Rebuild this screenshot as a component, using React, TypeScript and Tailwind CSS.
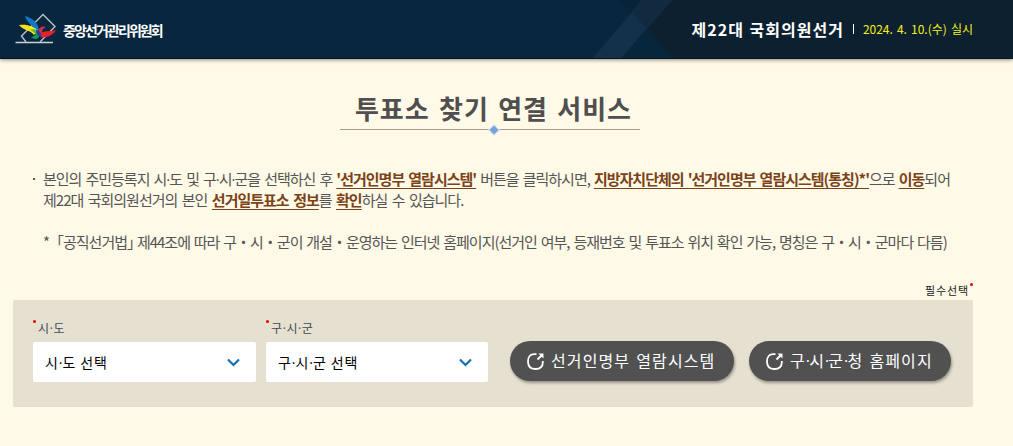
import { Fragment } from 'react';
import type { ReactNode } from 'react';

function Logo() {
  return (
    <svg width="42" height="32" viewBox="0 0 42 32" fill="none">
      <path d="M0.500 29.500H38" stroke="#c9d0d8" strokeWidth="1.6" />
      <path d="M11 29L6.500 23L28 1.500L40 13.500L25 29" stroke="#b9c2cc" strokeWidth="1.4" />
      <path d="M10 3C17 5 23 9 24 17L20 18C18 12 12 10 10 3Z" fill="#1377c8" />
      <path d="M4 12C12 11 19 13 23 18L19 22C16 17 9 18 4 12Z" fill="#f5e616" />
      <path d="M15 17C18 18 20 20 21 22L23 18C20 16 18 16 15 17Z" fill="#55b947" />
      <path d="M16 24C19 24 22 21 24 17L24 24C22 27 18 26 16 24Z" fill="#139c58" />
      <path d="M24 16C26 13 29 13 31 14C28 15 27 17 27 20L24 22Z" fill="#d72a4c" />
      <path d="M26 20C31 17 36 19 41 17C38 22 33 25 25 24Z" fill="#e8202b" />
      <path d="M21 17C24 17 27 20 26 24C23 23 21 21 21 17Z" fill="#29409b" />
    </svg>
  );
}

// Korean fonts set the middle dot wide, so it is taken from a Latin one
function Dotted({ text, dotClass = '' }: { text: string; dotClass?: string }) {
  return text.split('·').map((part, i) => (
    <Fragment key={i}>
      {i > 0 && <span className={`font-['Open_Sans',sans-serif] leading-none ${dotClass}`}>·</span>}
      {part}
    </Fragment>
  ));
}

function Header() {
  return (
    <header className="relative flex h-[59px] items-center justify-between border-b border-[#061521] bg-[#08273f] pl-[15px] pr-10 shadow-[0_1px_4px_rgba(0,0,0,0.45)]">
      <svg className="absolute inset-0 h-[58px] w-full" viewBox="0 0 1013 58" preserveAspectRatio="none">
        <path d="M620 0H1013V58H672Z" fill="#0d2030" />
        <path d="M620 0H642L633 15Z" fill="#062338" />
        <path d="M621 58L647 29L672 58Z" fill="#08263b" />
        <path d="M642 0H672L621 58H593Z" fill="#14314a" />
        <path d="M642 0H672L647 29L633 13Z" fill="#112a40" />
      </svg>
      <div className="relative flex items-center">
        <Logo />
        <span className="ml-[6px] pt-[2px] text-[14px] font-bold tracking-[-1.9px] text-white">중앙선거관리위원회</span>
      </div>
      <div className="relative flex items-center">
        <strong className="text-[16px] font-bold tracking-[1px] text-white [word-spacing:1px]">제22대 국회의원선거</strong>
        <i className="ml-[9px] mr-[9px] h-[10px] w-px bg-white" />
        <span className="text-[12px] text-[#f3f01c] [word-spacing:1.4px]">2024. 4. 10.(수) 실시</span>
      </div>
    </header>
  );
}

function Mark({ children }: { children: ReactNode }) {
  return <strong className="font-bold text-[#7a4317] underline underline-offset-[3px]">{children}</strong>;
}

function Title() {
  return (
    <div className="relative -left-[17px] mx-auto mt-[30px] flex h-[41px] w-[300px] justify-center border-b border-[#9f9f95] pl-[8px]">
      <h2 className="whitespace-nowrap text-[26px] font-bold leading-[38px] tracking-[1px] text-[#4f4f4f] [word-spacing:2.4px]">
        투표소 찾기 연결 서비스
      </h2>
      <svg className="absolute -bottom-[7px] left-[148px]" width="12" height="12" viewBox="0 0 12 12">
        <path d="M6 0L12 6L6 12L0 6Z" fill="#d8e4f0" />
        <path d="M6 1.500L10.500 6L6 10.500L1.500 6Z" fill="#76a3dc" />
      </svg>
    </div>
  );
}

function Notice() {
  return (
    <div className="mt-[38px] whitespace-nowrap pl-[43px] text-[15px] leading-[21px] tracking-[-1px] text-[#555]">
      <div className="relative">
        <i className="absolute -left-[10px] top-[10px] size-[2px] bg-[#555]" />
        <p className="[word-spacing:1.7px]">
          <Dotted text="본인의 주민등록지 시·도 및 구·시·군을 선택하신 후 " />
          <Mark>'선거인명부 열람시스템'</Mark> 버튼을 클릭하시면,{' '}
          <Mark>지방자치단체의 '선거인명부 열람시스템(통칭)*'</Mark>으로 <Mark>이동</Mark>되어
        </p>
        <p className="[word-spacing:2.1px]">
          제22대 국회의원선거의 본인 <Mark>선거일투표소 정보</Mark>를 <Mark>확인</Mark>하실 수 있습니다.
        </p>
      </div>
      <p className="mt-[21px] [word-spacing:1.5px]">
        *「공직선거법<span className="tracking-[-9px]">」</span> 제44조에 따라 구・시・군이
        개설・운영하는 인터넷 홈페이지(선거인 여부, 등재번호 및 투표소 위치 확인 가능, 명칭은 구・시・군마다 다름)
      </p>
    </div>
  );
}

function Field({ label, width }: { label: string; width: string }) {
  return (
    <div className={width}>
      <div className="relative h-[22px] pl-[5px] text-[12px] leading-[16px] tracking-[0.6px] text-[#3f4a55]">
        <i className="absolute left-0 top-0 size-[3px] rounded-full bg-[#e60000]" />
        <Dotted text={label} />
      </div>
      <button className="flex h-10 w-full items-center justify-between rounded-[2px] bg-white pl-3 pr-4 text-[14px] tracking-[0.9px] text-black">
        <span>
          <Dotted text={label} dotClass="tracking-normal" /> 선택
        </span>
        <svg width="13" height="9" viewBox="0 0 13 9" fill="none">
          <path d="M1 1.500L6.500 7L12 1.500" stroke="#146fb5" strokeWidth="2.200" />
        </svg>
      </button>
    </div>
  );
}

function LinkButton({ width, label }: { width: string; label: string }) {
  return (
    <button
      className={`flex h-10 items-center whitespace-nowrap rounded-full bg-[#515151] pl-[17px] text-[16px] tracking-[1.1px] text-white shadow-[1px_2px_3px_rgba(0,0,0,0.35)] [word-spacing:1.5px] ${width}`}
    >
      <svg className="mr-[7px] shrink-0" width="17" height="17" viewBox="0 0 17 17" fill="none" stroke="#fff">
        <path
          d="M9.500 1.200H7C3.500 1.200 1 4 1 8.500C1 13 3.500 16 8 16H9C13 16 15.800 13.500 15.800 9.500V8"
          strokeWidth="1.8"
        />
        <path d="M10.500 6.500L14.500 2.500" strokeWidth="2" />
        <path d="M11.500 0.500H16.500V5.500Z" fill="#fff" stroke="none" />
      </svg>
      <span className="pb-[2px]">
        <Dotted text={label} dotClass="tracking-[-0.9px]" />
      </span>
    </button>
  );
}

export default function App() {
  return (
    <div className="h-[446px] w-[1013px] overflow-hidden bg-[#fff9e7] font-['Noto_Sans_CJK_KR',sans-serif]">
      <Header />
      <Title />
      <Notice />
      <main className="ml-[13px] mt-[30px] w-[960px]">
        <div className="relative h-[18px] pr-[4px] text-right text-[11px] leading-[16px] tracking-[0.9px] text-[#222]">
          필수선택
          <i className="absolute right-0 top-[1px] size-[3px] rounded-full bg-[#e60000]" />
        </div>
        <div className="flex h-[107px] rounded-[2px] bg-[#e5e0d0] pl-5 pt-5">
          <Field label="시·도" width="w-[223px]" />
          <div className="w-[10px]" />
          <Field label="구·시·군" width="w-[222px]" />
          <div className="ml-[22px] mt-[21px] flex gap-[15px]">
            <LinkButton width="w-[224px]" label="선거인명부 열람시스템" />
            <LinkButton width="w-[202px]" label="구·시·군·청 홈페이지" />
          </div>
        </div>
      </main>
    </div>
  );
}
